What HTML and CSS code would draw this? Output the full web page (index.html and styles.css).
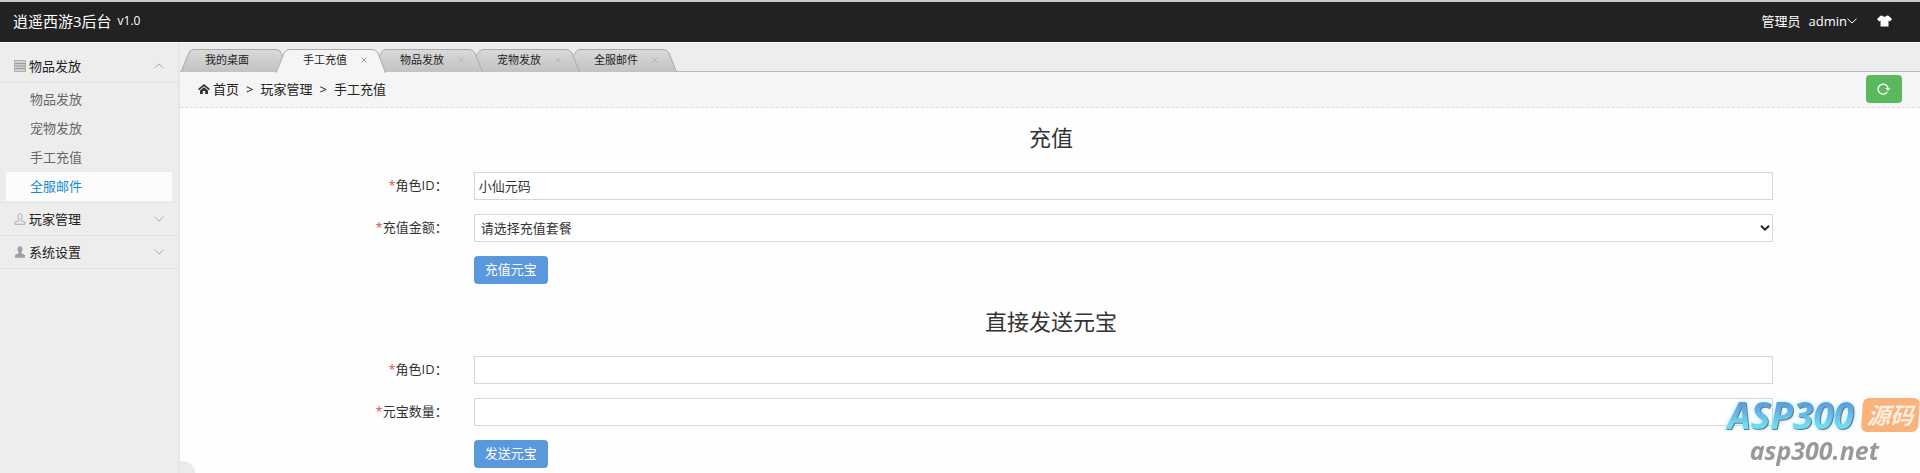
FILE: index.html
```html
<!DOCTYPE html>
<html lang="zh-CN">
<head>
  <meta charset="utf-8">
  <title>逍遥西游3后台</title>
  <link rel="stylesheet" href="styles.css">
</head>
<body>
  <svg class="sprite" aria-hidden="true">
    <linearGradient id="tab-fill" x1="0" y1="0" x2="0" y2="1">
      <stop offset="0" stop-color="#dadada"/>
      <stop offset="1" stop-color="#c2c2c2"/>
    </linearGradient>
    <symbol id="tab-shape" viewBox="0 0 110 23" preserveAspectRatio="none">
      <path d="M0 23 L8 4 Q10 .5 13 .5 H96 Q100 .5 102 4 L109.500 23" vector-effect="non-scaling-stroke"/>
    </symbol>
    <symbol id="arrow" viewBox="0 0 10 6">
      <path d="M.5 .8 L5 5 L9.500 .8" fill="none" stroke="currentColor"/>
    </symbol>
    <symbol id="cross" viewBox="0 0 8 8">
      <path d="M1.500 1.500 L6.500 6.500 M6.500 1.500 L1.500 6.500" fill="none" stroke="currentColor"/>
    </symbol>
  </svg>

  <header class="navbar">
    <a class="logo" href="#">逍遥西游3后台</a>
    <span class="version">v1.0</span>
    <nav class="userbar">
      <span>管理员</span>
      <a href="#" class="user">admin<svg class="arrow-icon"><use href="#arrow"/></svg></a>
      <a href="#" class="skin" title="换肤">
        <svg width="15" height="12" viewBox="0 0 15 12"><path d="M5 .5 Q7.500 3 10 .5 L11.500 .8 L15 4 L13 6.500 L11.500 5.500 V11.500 H3.500 V5.500 L2 6.500 L0 4 L3.500 .8 Z" fill="#fff"/></svg>
      </a>
    </nav>
  </header>

  <div class="wrap">
    <aside class="sidebar">
      <dl class="menu">
        <dt class="open">
          <svg class="menu-icon" viewBox="0 0 12 12"><rect x=".5" y=".5" width="11" height="11" fill="#d0d0d0" stroke="#b0b0b0"/><path d="M1 3.500 H11 M1 6 H11 M1 8.500 H11" stroke="#999"/></svg>
          物品发放
          <svg class="arrow-icon"><use href="#arrow"/></svg>
        </dt>
        <dd>
          <ul>
            <li><a href="#">物品发放</a></li>
            <li><a href="#">宠物发放</a></li>
            <li><a href="#">手工充值</a></li>
            <li class="current"><a href="#">全服邮件</a></li>
          </ul>
        </dd>
      </dl>
      <dl class="menu">
        <dt>
          <svg class="menu-icon" viewBox="0 0 12 12"><path d="M6 .7 C3.500 .7 3.500 4 4.800 5.800 V7.500 L1 9.300 V11.300 H11 V9.300 L7.200 7.500 V5.800 C8.500 4 8.500 .7 6 .7 Z" fill="none" stroke="#aaa"/></svg>
          玩家管理
          <svg class="arrow-icon"><use href="#arrow"/></svg>
        </dt>
      </dl>
      <dl class="menu">
        <dt>
          <svg class="menu-icon" viewBox="0 0 12 12"><path d="M6 .3 C3 .3 3 4 4.500 6 V7.300 L1 9 V11.700 H11 V9 L7.500 7.300 V6 C9 4 9 .3 6 .3 Z" fill="#a0a0a4"/></svg>
          系统设置
          <svg class="arrow-icon"><use href="#arrow"/></svg>
        </dt>
      </dl>
    </aside>

    <section class="main">
      <ul class="tabs">
        <li class="home"><svg class="tab-bg"><use href="#tab-shape"/></svg><span>我的桌面</span></li>
        <li class="active"><svg class="tab-bg"><use href="#tab-shape"/></svg><span>手工充值</span><svg class="close"><use href="#cross"/></svg></li>
        <li><svg class="tab-bg"><use href="#tab-shape"/></svg><span>物品发放</span><svg class="close"><use href="#cross"/></svg></li>
        <li><svg class="tab-bg"><use href="#tab-shape"/></svg><span>宠物发放</span><svg class="close"><use href="#cross"/></svg></li>
        <li><svg class="tab-bg"><use href="#tab-shape"/></svg><span>全服邮件</span><svg class="close"><use href="#cross"/></svg></li>
      </ul>

      <nav class="breadcrumb">
        <svg width="12" height="10" viewBox="0 0 12 10"><path d="M6 0 L12 5 L11 6.300 L6 2.200 L1 6.300 L0 5 Z M6 3.200 L10 6.400 V10 H7.200 V7 H4.800 V10 H2 V6.400 Z" fill="#333"/></svg>
        <span>首页</span>
        <span class="sep">&gt;</span>
        <span>玩家管理</span>
        <span class="sep">&gt;</span>
        <span>手工充值</span>
        <button type="button" class="btn refresh" title="刷新">
          <svg width="14" height="12" viewBox="0 0 14 12"><path d="M10.200 9 A5 5 0 1 1 11 5" fill="none" stroke="#fff" stroke-width="1.300"/><path d="M8.300 5 H13.500 L11 8 Z" fill="#fff"/></svg>
        </button>
      </nav>

      <form class="form">
        <h2>充值</h2>
        <div class="row">
          <label for="role"><i>*</i>角色ID：</label>
          <input type="text" id="role" value="小仙元码">
        </div>
        <div class="row">
          <label for="money"><i>*</i>充值金额：</label>
          <div class="select-box">
            <select id="money">
              <option>请选择充值套餐</option>
            </select>
            <svg width="10" height="6" viewBox="0 0 10 6"><path d="M1 .8 L5 4.600 L9 .8" fill="none" stroke="#222" stroke-width="2"/></svg>
          </div>
        </div>
        <div class="row">
          <button type="button" class="btn submit">充值元宝</button>
        </div>
      </form>

      <form class="form">
        <h2>直接发送元宝</h2>
        <div class="row">
          <label for="role2"><i>*</i>角色ID：</label>
          <input type="text" id="role2">
        </div>
        <div class="row">
          <label for="amount"><i>*</i>元宝数量：</label>
          <input type="text" id="amount">
        </div>
        <div class="row">
          <button type="button" class="btn submit">发送元宝</button>
        </div>
      </form>
    </section>
  </div>

  <div class="corner"></div>

  <div class="watermark">
    <div class="brand"><span class="brand-name">ASP300</span><span class="brand-tag">源码</span></div>
    <div class="site">asp300.net</div>
  </div>
</body>
</html>
```

FILE: styles.css
```css
* {
  box-sizing: border-box;
}

body {
  margin: 0;
  min-height: 100vh;
  display: flex;
  flex-direction: column;
  font-family: "Open Sans", "Noto Sans CJK SC", sans-serif;
  font-size: 13px;
  line-height: 20px;
  color: #333;
  background: #fefefe;
}

ul, dl, dd, h2 {
  margin: 0;
  padding: 0;
}

ul {
  list-style: none;
}

a {
  color: inherit;
  text-decoration: none;
}

.sprite {
  position: absolute;
  width: 0;
  height: 0;
}

.arrow-icon {
  width: 10px;
  height: 6px;
}

/* top bar */
.navbar {
  display: flex;
  align-items: center;
  height: 42px;
  padding: 0 28px 2px 13px;
  border-top: 2px solid #c8cccc;
  background: #222;
  color: #fff;
}

.logo {
  font-size: 15px;
}

.version {
  margin-left: 6px;
  font-size: 12px;
}

.userbar {
  display: flex;
  align-items: center;
  margin-left: auto;
}

.user {
  display: flex;
  align-items: center;
  margin-left: 8px;
}

.skin {
  display: flex;
  margin-left: 20px;
}

.wrap {
  flex: 1;
  display: flex;
}

/* left menu */
.sidebar {
  width: 180px;
  padding-top: 7px;
  border-top: 1px solid #fff;
  border-right: 2px solid #e6e6e6;
  background: #ededed;
}

.menu dt {
  display: flex;
  align-items: center;
  height: 33px;
  padding: 0 14px 1px;
  border-bottom: 1px solid #e2e2e2;
  color: #222;
}

.menu dt .arrow-icon {
  margin-left: auto;
  color: #aaa;
}

.menu dt.open .arrow-icon {
  transform: rotate(180deg);
}

.menu-icon {
  width: 12px;
  height: 12px;
  margin-right: 3px;
}

.menu dd {
  padding: 2px 6px 1px;
  border-bottom: 1px solid #e6e6e6;
}

.menu li a {
  display: block;
  padding-left: 24px;
  line-height: 29px;
  color: #666;
}

.menu .current a {
  background: #fcfcfc;
  color: #148cd2;
}

/* tabs */
.main {
  flex: 1;
  min-width: 0;
}

.tabs {
  display: flex;
  height: 30px;
  padding: 6px 0 0 1px;
  border-top: 1px solid #fff;
  border-bottom: 1px solid #bbb;
  background: #ededed;
  font-size: 11px;
}

.tabs li {
  position: relative;
  display: flex;
  align-items: center;
  width: 110px;
  height: 23px;
  margin-right: -13px;
  padding: 0 18px 1px 27px;
  color: #222;
}

.tabs .home {
  width: 108px;
  padding-left: 24px;
}

.tabs li:nth-child(2) { z-index: 4; }
.tabs li:nth-child(3) { z-index: 3; }
.tabs li:nth-child(4) { z-index: 2; }

.tab-bg {
  position: absolute;
  inset: 0;
  width: 100%;
  height: 100%;
  fill: url(#tab-fill);
  stroke: #aaa;
}

/* the open tab runs over the bottom line */
.tabs .active {
  height: 24px;
  padding-bottom: 2px;
}

.active .tab-bg {
  fill: #f5f5f5;
}

.tabs span {
  position: relative;
}

.close {
  position: relative;
  width: 8px;
  height: 8px;
  margin-left: auto;
  color: #b4b4b4;
}

.active .close {
  color: #999;
}

/* breadcrumb */
.breadcrumb {
  display: flex;
  align-items: center;
  height: 36px;
  padding: 0 18px 2px;
  border-bottom: 1px dashed #ddd;
  background: #f5f5f5;
  color: #222;
}

.breadcrumb svg + span {
  margin-left: 3px;
}

.sep {
  margin: 0 7px;
}

.btn {
  height: 28px;
  border: 0;
  border-radius: 4px;
  font: inherit;
  color: #fff;
  cursor: pointer;
}

.refresh {
  display: flex;
  align-items: center;
  justify-content: center;
  width: 36px;
  margin-left: auto;
  background: #5cb85c;
}

/* forms */
.form {
  padding: 15px 3px 0 5px;
}

.form + .form {
  padding-top: 23px;
}

.form h2 {
  margin-bottom: 21px;
  font-size: 22px;
  font-weight: normal;
  line-height: 28px;
  text-align: center;
}

.row {
  display: grid;
  grid-template-columns: 2fr 9fr 1fr;
  margin-bottom: 14px;
}

.row:last-child {
  margin-bottom: 0;
}

.row label {
  padding-right: 26px;
  line-height: 26px;
  text-align: right;
}

.row label i {
  font-style: normal;
  color: #d9534f;
}

.row input,
.row select {
  width: 100%;
  height: 28px;
  padding: 0 4px 2px;
  border: 1px solid #d6d6d6;
  border-radius: 0;
  background: #fff;
  font: inherit;
  color: #333;
}

.row select {
  display: block;
  padding: 0 6px;
  appearance: none;
}

.select-box {
  position: relative;
}

.select-box svg {
  position: absolute;
  top: 11px;
  right: 3px;
  pointer-events: none;
}

.submit {
  grid-column: 2;
  width: 74px;
  padding: 0 0 2px;
  background: #5a98de;
}

.corner {
  position: fixed;
  left: 180px;
  bottom: 0;
  width: 15px;
  height: 12px;
  border-top-right-radius: 12px;
  background: #ebebeb;
}

/* watermark */
.watermark {
  position: fixed;
  right: 1px;
  bottom: 6px;
  z-index: 5;
  font-weight: bold;
  font-style: italic;
  pointer-events: none;
}

.brand {
  display: flex;
  align-items: center;
  gap: 4px;
}

.brand-name {
  padding: 0 4px;
  background: linear-gradient(#5b9fe0 20%, #6fdcf5 80%);
  background-clip: text;
  -webkit-background-clip: text;
  font-size: 37px;
  line-height: 36px;
  color: transparent;
  filter: drop-shadow(1px 1px 0 #777) drop-shadow(0 0 2px #a8ecfa);
}

.brand-tag {
  width: 57px;
  border-radius: 6px;
  background: #fab27b;
  color: #fdeee0;
  font-size: 23px;
  line-height: 34px;
  text-align: center;
  transform: skewX(-4deg);
}

.site {
  padding-right: 40px;
  font-size: 25px;
  line-height: 34px;
  text-align: right;
  color: #999;
}
```
